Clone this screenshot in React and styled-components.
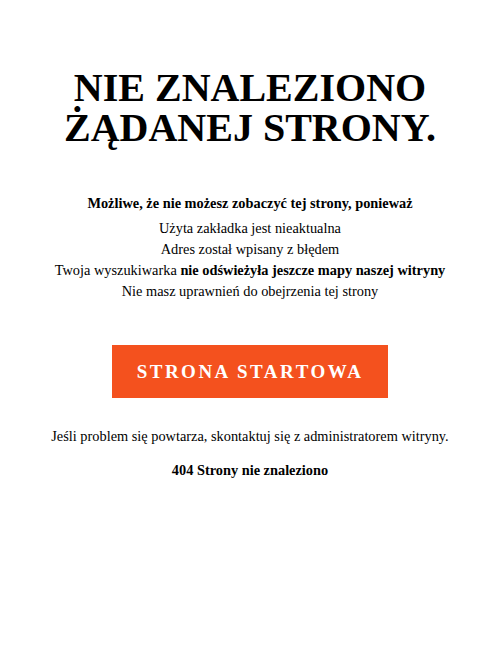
import styled, { createGlobalStyle } from 'styled-components';

const GlobalStyle = createGlobalStyle`
  body {
    margin: 0;
    background: #ffffff;
    font-family: "Liberation Serif", "Times New Roman", serif;
    color: #000000;
  }
`;

const Page = styled.main`
  width: 500px;
  padding: 68px 20px 0;
  box-sizing: border-box;
  display: flex;
  flex-direction: column;
  align-items: center;
  text-align: center;
  font-size: 14.35px;
  line-height: 21px;
`;

const Title = styled.h1`
  margin: 0;
  font-size: 40px;
  line-height: 40px;
  font-weight: bold;
`;

const Intro = styled.p`
  margin: 45px 0 4px;
  font-weight: bold;
`;

const Reasons = styled.ul`
  margin: 0;
  padding: 0;
  list-style: none;
`;

const HomeButton = styled.a`
  margin-top: 43px;
  width: 276px;
  height: 53px;
  display: flex;
  align-items: center;
  justify-content: center;
  background: #f4511e;
  color: #ffffff;
  font-size: 19px;
  font-weight: bold;
  letter-spacing: 2.5px;
  text-decoration: none;
`;

const Note = styled.p`
  margin: ${props => props.top}px 0 0;
  font-weight: ${props => (props.bold ? 'bold' : 'normal')};
`;

export default function App() {
  return (
    <>
      <GlobalStyle />
      <Page>
        <Title>
          NIE ZNALEZIONO
          <br />
          ŻĄDANEJ STRONY.
        </Title>
        <Intro>Możliwe, że nie możesz zobaczyć tej strony, ponieważ</Intro>
        <Reasons>
          <li>Użyta zakładka jest nieaktualna</li>
          <li>Adres został wpisany z błędem</li>
          <li>
            Twoja wyszukiwarka <b>nie odświeżyła jeszcze mapy naszej witryny</b>
          </li>
          <li>Nie masz uprawnień do obejrzenia tej strony</li>
        </Reasons>
        <HomeButton href="#">STRONA STARTOWA</HomeButton>
        <Note top={28}>Jeśli problem się powtarza, skontaktuj się z administratorem witryny.</Note>
        <Note top={13} bold>
          404 Strony nie znaleziono
        </Note>
      </Page>
    </>
  );
}
